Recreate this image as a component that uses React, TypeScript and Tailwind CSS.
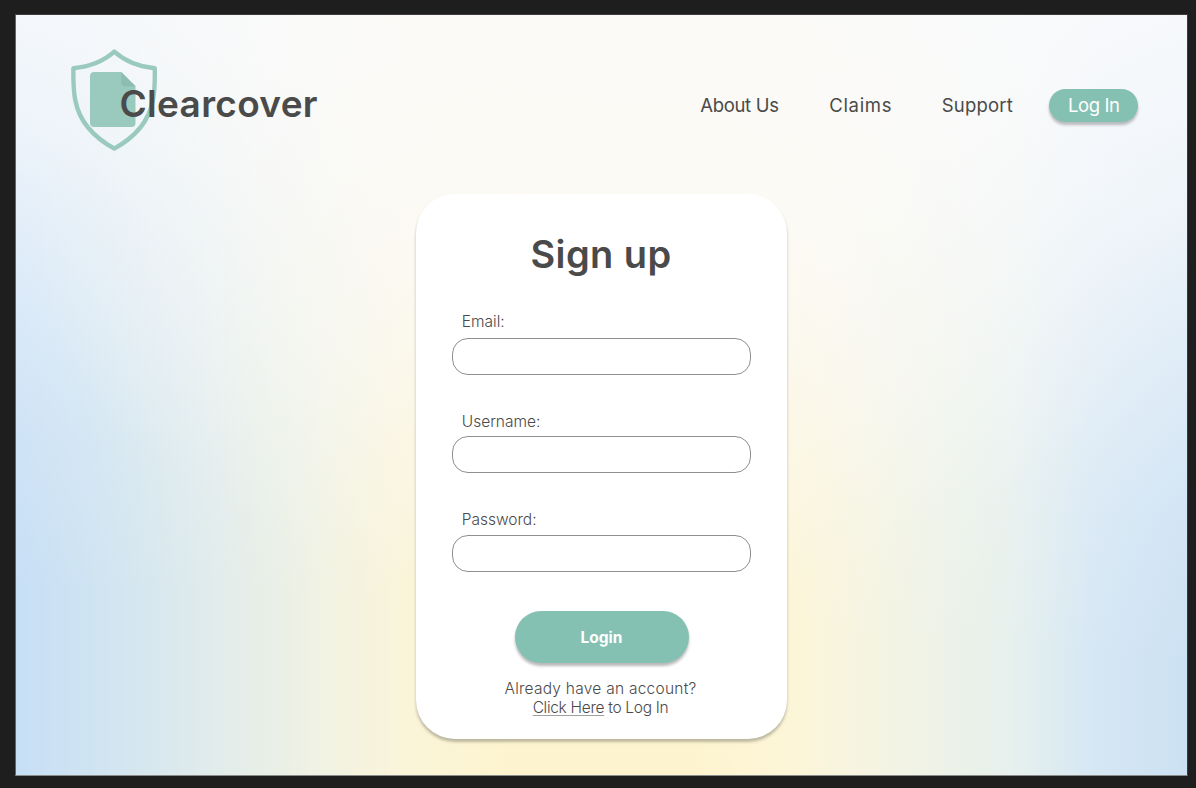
import React from "react";

function Logo() {
  return (
    <a href="#" className="flex h-[102px] items-start" aria-label="Clearcover">
      <svg className="h-[102px] w-[88px] shrink-0" viewBox="70 49 88 102" fill="none">
        <path
          d="M114.3 51.6C104.2 60.6 90.5 66.6 73.4 68.2C73.2 82 73.4 92.5 75.6 101.5C79.6 121.5 92.5 136.5 114.3 148.6C136.1 136.5 148.6 121.5 152.6 101.5C154.8 92.5 155 82 154.8 68.2C137.9 66.6 124.4 60.6 114.3 51.6Z"
          stroke="#9ac9be"
          strokeWidth="4.4"
          strokeLinejoin="round"
        />
        <path
          d="M94.2 72H121.2L135.5 86V123C135.5 125.5 134 127 131.5 127H94C91.5 127 90 125.5 90 123V76.2C90 73.5 91.7 72 94.2 72Z"
          fill="#9ac9be"
        />
        <path d="M121.2 72L135.5 86.6H125.7C122.7 86.6 121.2 85.1 121.2 82.1Z" fill="#8dbdb0" />
      </svg>
      <span className="relative -ml-[38.5px] mt-[33px] text-[37px] leading-[44px] font-semibold tracking-[0.3px]">
        Clearcover
      </span>
    </a>
  );
}

function Field({ label, type, spacing }: { label: string; type: string; spacing: string }) {
  return (
    <label className={`flex w-full flex-col ${spacing}`}>
      <span className="pl-[10px] text-[15.5px] leading-5 font-light">{label}</span>
      <input
        type={type}
        className="h-[37px] w-full rounded-[16px] border border-[#8f8f8f] bg-white px-4 outline-none"
      />
    </label>
  );
}

export default function App() {
  return (
    <div className="flex h-[788px] w-full bg-[#1e1e1e] pt-[14px] pr-2 pb-3 pl-[15px] font-['Inter',sans-serif] text-[#4a4a4a]">
      <div className="flex flex-1 flex-col items-center border border-t-[#3d393b] border-r-[#39393b] border-b-[#898c8a] border-l-[#606468] bg-[radial-gradient(ellipse_50%_50%_at_50%_28%,rgba(252,251,250,0.5)_0%,rgba(252,251,250,0.45)_30%,rgba(252,251,250,0.22)_65%,rgba(252,251,250,0)_100%),linear-gradient(184deg,rgba(251,251,252,0.9)_0%,rgba(251,251,252,0.84)_12%,rgba(251,251,252,0.72)_23.5%,rgba(251,251,252,0.52)_34.5%,rgba(251,251,252,0.29)_50%,rgba(251,251,252,0.14)_60%,rgba(251,251,252,0)_78%),linear-gradient(90deg,#c7dff6_0%,#cee3f2_6%,#dfebec_16%,#f0f2e3_26%,#faf4d9_33%,#fdf4cf_42%,#fdf4cf_58%,#fcf5d7_66%,#f5f4e2_73%,#e6f0ed_85%,#d6e7f4_92%,#cbe1f3_100%)] bg-origin-padding">
        <header className="flex h-[178.5px] w-full items-start justify-between pt-[34px] pr-[49px] pl-[54px]">
          <Logo />
          <nav className="flex items-start pt-[39.5px] text-[18.5px] leading-[32px]">
            <a href="#" className="tracking-[-0.3px]">About Us</a>
            <a href="#" className="ml-[50.5px] tracking-[0.7px]">Claims</a>
            <a href="#" className="ml-[49.5px] tracking-[0.2px]">Support</a>
            <a
              href="#"
              className="ml-[35.5px] flex h-[33px] w-[89.5px] items-center justify-center rounded-full bg-[#84c1b2] pb-px pl-px tracking-[-0.4px] text-white shadow-[0_3px_3px_rgba(0,0,0,0.25)]"
            >
              Log In
            </a>
          </nav>
        </header>
        <main className="flex h-[545.5px] w-[371.5px] flex-col items-center rounded-[39px] bg-white px-[36px] pt-[37px] shadow-[0_3px_3px_rgba(0,0,0,0.25)]">
          <h1 className="pr-px text-[38px] leading-[46px] font-semibold tracking-[0.4px]">Sign up</h1>
          <form className="flex w-full flex-col items-center pt-[35px]">
            <div className="flex w-full flex-col">
              <Field label="Email:" type="email" spacing="gap-[6.5px]" />
              <Field label="Username:" type="text" spacing="mt-[36.5px] gap-[4.5px]" />
              <Field label="Password:" type="password" spacing="mt-[36.5px] gap-[5px]" />
            </div>
            <button
              type="button"
              className="mt-[39px] h-[52.5px] w-[174px] rounded-full bg-[#84c1b2] pt-px text-[15.5px] font-bold text-white shadow-[0_3px_3px_rgba(0,0,0,0.28)]"
            >
              Login
            </button>
          </form>
          <p className="mt-[16px] pr-[2px] text-center text-[15.5px] leading-[19px] font-light">
            <span className="tracking-[0.25px]">Already have an account?</span>
            <br />
            <span className="tracking-[-0.3px]">
              <a href="#" className="underline decoration-[#a0a0a0] decoration-[1px] underline-offset-[1.5px]">Click Here</a> to Log In
            </span>
          </p>
        </main>
      </div>
    </div>
  );
}
